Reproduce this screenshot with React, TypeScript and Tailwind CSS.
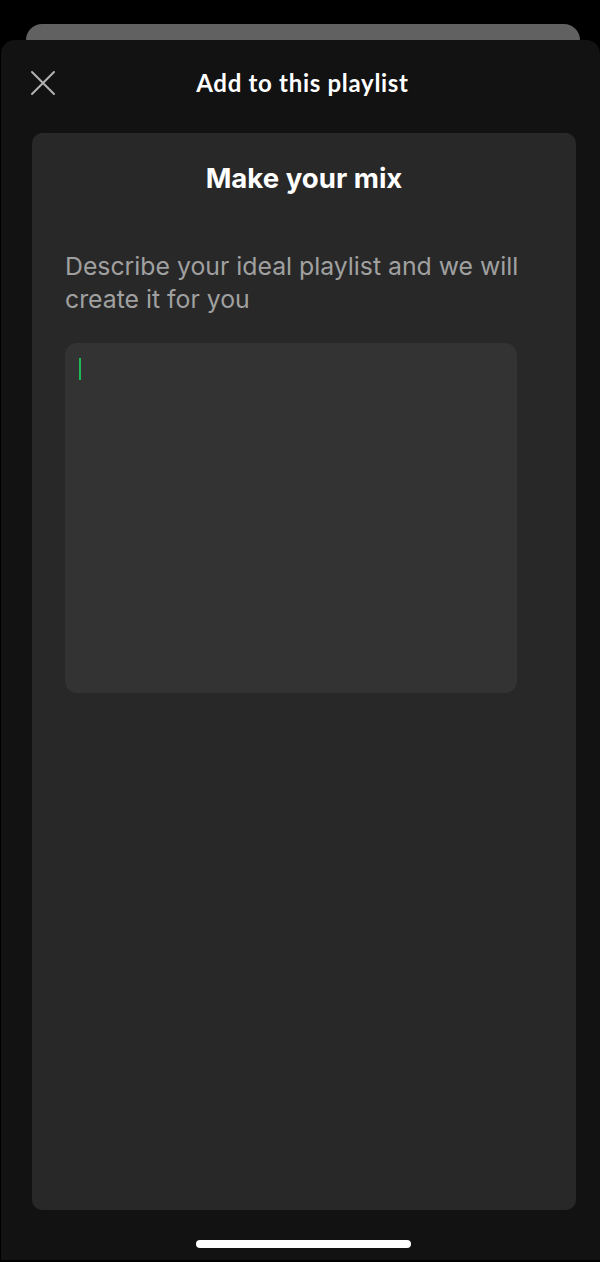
import { useState } from "react";

export default function App() {
  const [prompt, setPrompt] = useState("");

  return (
    <div className="h-[1262px] w-[600px] bg-black overflow-hidden flex flex-col">
      {/* card stacked behind the sheet */}
      <div className="mt-6 ml-[26px] mr-[20px] h-6 rounded-t-[16px] bg-[#616161] shrink-0" />

      <div className="-mt-2 ml-px h-[1220px] rounded-t-[14px] bg-[#121212] flex flex-col shrink-0">
        <header className="h-[86px] grid grid-cols-[1fr_auto_1fr] items-center">
          <button className="ml-[27px] w-[30px] h-[30px] flex items-center justify-center text-[#b3b3b3]">
            <svg width="26" height="26" viewBox="0 0 26 26" fill="none">
              <path
                d="M2 2L24 24M24 2L2 24"
                stroke="currentColor"
                strokeWidth="2"
                strokeLinecap="round"
              />
            </svg>
          </button>
          <h1 className="ml-1 font-['Lato',sans-serif] font-bold text-[24px] text-white tracking-[0.7px]">
            Add to this playlist
          </h1>
          <div />
        </header>

        <section className="mt-[7px] ml-[31px] mr-[24px] h-[1077px] rounded-[10px] bg-[#282828] flex flex-col font-['Inter',sans-serif]">
          <h2 className="mt-[29px] text-center text-white font-bold text-[27.6px] leading-8">
            Make your mix
          </h2>
          <p className="mt-[56px] ml-[33px] mr-[30px] text-[24.8px] leading-[33px] text-[#a0a0a0]">
            Describe your ideal playlist and we will create it for you
          </p>
          <div className="mt-[27px] ml-[33px] w-[452px] h-[350px] rounded-[12px] bg-[#333333] relative">
            <textarea
              value={prompt}
              onChange={(e) => setPrompt(e.target.value)}
              className="w-full h-full bg-transparent resize-none outline-none px-[14px] py-[15px] text-white text-[20px]"
            />
            {prompt === "" && (
              <span className="absolute left-[14px] top-[15px] w-[2px] h-[22px] bg-[#1db954]" />
            )}
          </div>
        </section>

        <div className="flex-1 flex items-start justify-center pt-[30px] pl-[6px]">
          <div className="w-[215px] h-2 rounded-full bg-white" />
        </div>
      </div>
    </div>
  );
}
